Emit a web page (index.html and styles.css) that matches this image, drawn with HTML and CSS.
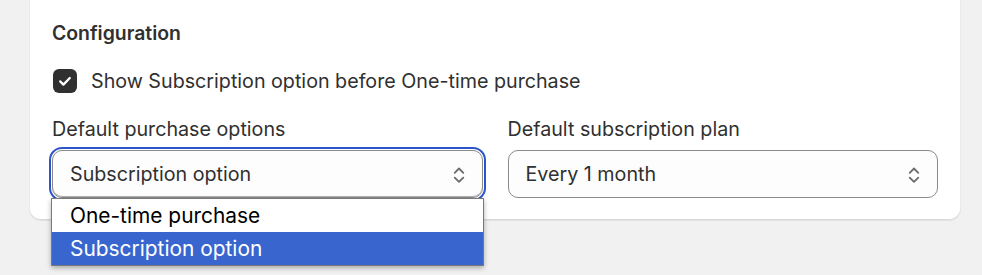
FILE: index.html
```html
<!DOCTYPE html>
<html lang="en">
<head>
    <meta charset="UTF-8">
    <meta name="viewport" content="width=device-width, initial-scale=1.0">
    <title>Configuration</title>
    <link rel="stylesheet" href="styles.css">
</head>
<body>
    <div class="card">
        <h2 class="card-title">Configuration</h2>
        <label class="checkbox">
            <span class="checkbox-box">
                <svg viewBox="0 0 24 24" width="24" height="24"><path d="M7.2 12.4l3.2 3.2 6.4-6.6" fill="none" stroke="#fff" stroke-width="2.3" stroke-linecap="round" stroke-linejoin="round"/></svg>
            </span>
            <span class="checkbox-text">Show Subscription option before One-time purchase</span>
        </label>
        <div class="fields">
            <div class="field">
                <div class="field-label">Default purchase options</div>
                <div class="select-wrap">
                    <div class="select focused">
                        <span class="select-value">Subscription option</span>
                        <svg class="select-icon" viewBox="0 0 20 20" width="26" height="26"><path d="M6.7 8.3l3.3-3.3 3.3 3.3M6.7 12l3.3 3.3 3.3-3.3" fill="none" stroke="#6b6b6b" stroke-width="1.4" stroke-linecap="round" stroke-linejoin="round"/></svg>
                    </div>
                    <ul class="dropdown">
                        <li>One-time purchase</li>
                        <li class="active">Subscription option</li>
                    </ul>
                </div>
            </div>
            <div class="field">
                <div class="field-label">Default subscription plan</div>
                <div class="select-wrap">
                    <div class="select">
                        <span class="select-value">Every 1 month</span>
                        <svg class="select-icon" viewBox="0 0 20 20" width="26" height="26"><path d="M6.7 8.3l3.3-3.3 3.3 3.3M6.7 12l3.3 3.3 3.3-3.3" fill="none" stroke="#6b6b6b" stroke-width="1.4" stroke-linecap="round" stroke-linejoin="round"/></svg>
                    </div>
                </div>
            </div>
        </div>
    </div>
</body>
</html>
```

FILE: styles.css
```css
html {
    height: 100%;
}
body {
    margin: 0;
    min-height: 100%;
    background-color: #f1f1f1;
    font-family: Inter, "Noto Sans", sans-serif;
    color: #303030;
}
.card {
    position: relative;
    background-color: white;
    margin: 0 21px 0 29px;
    padding: 21px 23px 22px;
    border-radius: 0 0 12px 12px;
    box-shadow: 0 1px 0 0 rgba(26, 26, 26, 0.07), inset 0 -1px 0 0 #d9d9d9, inset 1px 0 0 0 #ebebeb, inset -1px 0 0 0 #ebebeb;
}
.card-title {
    margin: 0;
    font-size: 19.4px;
    font-weight: 600;
    line-height: 24px;
}
.checkbox {
    display: flex;
    align-items: center;
    gap: 14px;
    margin-top: 24px;
    padding-left: 1px;
    font-size: 19.7px;
    line-height: 24px;
}
.checkbox-box {
    width: 24px;
    height: 24px;
    border-radius: 6px;
    background-color: #303030;
    display: flex;
}
.fields {
    display: grid;
    grid-template-columns: 1fr 1fr;
    gap: 25px;
    margin-top: 24px;
}
.field-label {
    font-size: 19.7px;
    line-height: 24px;
    margin-bottom: 9px;
}
.select-wrap {
    position: relative;
}
.select {
    height: 48px;
    box-sizing: border-box;
    border: 1px solid #8a8a8a;
    border-radius: 10px;
    background-color: #fdfdfd;
    display: flex;
    align-items: center;
    justify-content: space-between;
    padding: 0 10px 0 17px;
    font-size: 19.7px;
}
.select.focused {
    outline: 2.5px solid #2c55c9;
    outline-offset: 1px;
    box-shadow: inset 0 -1px 0 0 #b5b5b5;
}
.select-icon {
    margin-top: 2px;
}
.dropdown {
    position: absolute;
    z-index: 10;
    top: 48px;
    left: -1px;
    right: -1px;
    margin: 0;
    padding: 0;
    list-style: none;
    background-color: white;
    border: 1px solid #7a7a7a;
    box-shadow: 0 2px 5px rgba(0, 0, 0, 0.3);
    font-size: 20.9px;
    color: #000;
}
.dropdown li {
    height: 33px;
    line-height: 33px;
    padding-left: 18px;
}
.dropdown li.active {
    background-color: #3966ce;
    color: white;
}
```
